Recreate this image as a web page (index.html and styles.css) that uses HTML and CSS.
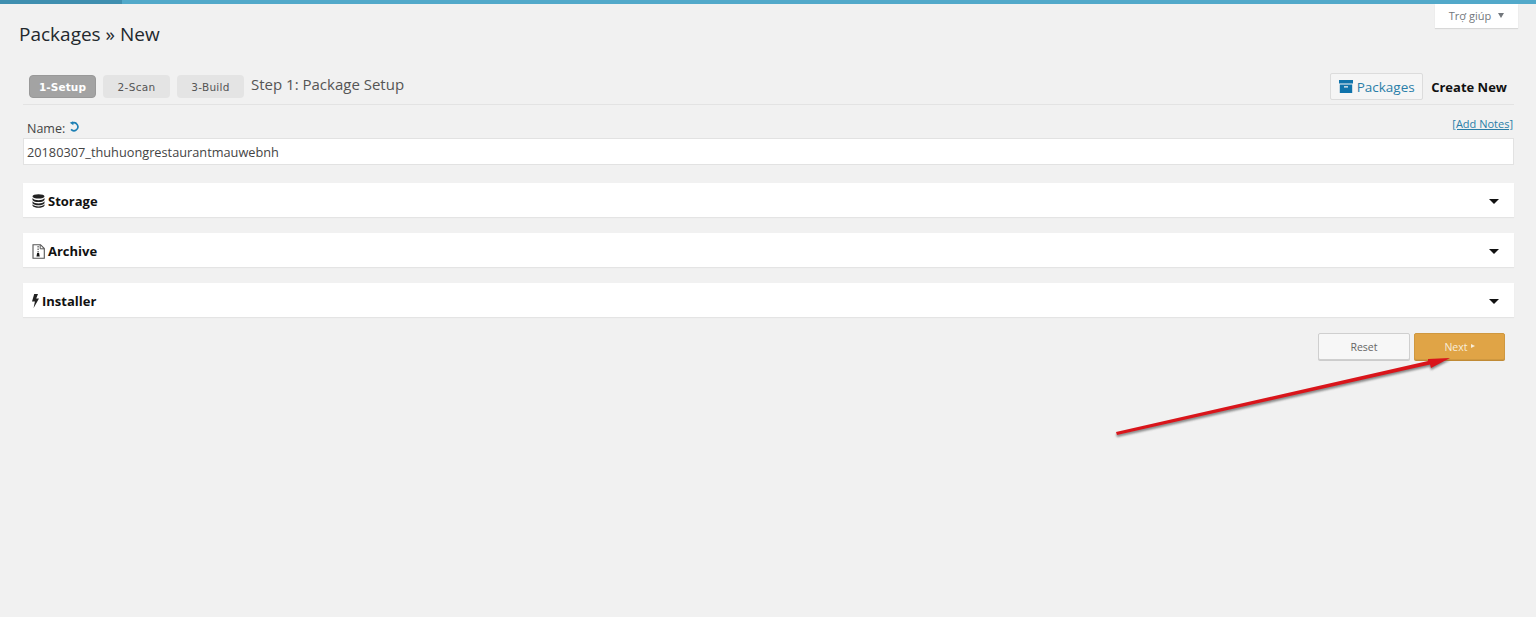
FILE: index.html
```html
<!DOCTYPE html>
<html lang="vi">
<head>
<meta charset="utf-8">
<title>Packages » New</title>
<link rel="stylesheet" href="styles.css">
</head>
<body>
<div class="topbar"><div class="topbar-dark"></div></div>
<div class="help-row"><div class="help-tab">Trợ giúp <span class="help-caret"></span></div></div>
<main class="wrap">
  <h1 class="title">Packages » New</h1>
  <div class="steps-row">
    <div class="steps">
      <span class="step step-active">1-Setup</span>
      <span class="step">2-Scan</span>
      <span class="step">3-Build</span>
      <span class="step-title">Step 1: Package Setup</span>
    </div>
    <div class="actions">
      <a class="pk-btn"><svg class="pk-icon" viewBox="0 0 14 13"><path d="M0 0h14v3.500H0z"/><path d="M.8 4.500h12.400V13H.8zM5 6.200v1.300h4V6.200z" fill-rule="evenodd"/></svg>Packages</a>
      <span class="create">Create New</span>
    </div>
  </div>
  <div class="name-area">
    <div class="name-head">
      <span class="name-label">Name: <svg class="undo" viewBox="0 0 12 12"><path d="M2.200 9.200 A4.300 4.300 0 1 0 3.400 2.400" fill="none" stroke="#1c7fb4" stroke-width="1.800"/><path d="M.8 1.800 L4.600 .2 L4.800 4.600 Z" fill="#1c7fb4"/></svg></span>
      <a class="notes">[Add Notes]</a>
    </div>
    <div class="name-input">20180307_thuhuongrestaurantmauwebnh</div>
  </div>
  <section class="panel">
    <div class="panel-title"><svg class="ic ic-db" viewBox="0 0 13 14"><ellipse cx="6.500" cy="2.400" rx="6" ry="2.200"/><path d="M.5 4c1 1.600 3.500 2.200 6 2.200S11.500 5.600 12.500 4v1.900c-1 1.500-3.500 2.200-6 2.200S1.500 7.400.5 5.900zM.5 7.200c1 1.500 3.500 2.200 6 2.200s5-.7 6-2.200v2c-1 1.500-3.500 2.100-6 2.100s-5-.6-6-2.100zM.5 10.300c1 1.500 3.500 2.100 6 2.100s5-.6 6-2.100v1.400c-1 1.500-3.500 2.100-6 2.100s-5-.6-6-2.100z"/></svg>Storage</div>
    <span class="caret"></span>
  </section>
  <section class="panel">
    <div class="panel-title"><svg class="ic ic-ar" viewBox="0 0 13 15"><path d="M1 .7h7.500L12.300 4.500V14.300H1z" fill="none" stroke="#555" stroke-width="1.100"/><path d="M8.200 1v3.800H12" fill="none" stroke="#555"/><path d="M5.500 2h1.200v1.500H5.500zM5.500 4.500h1.200V6H5.500zM5.500 7h1.200v1.500H5.500z" fill="#555"/><path d="M5.100 9h2l.6 3.400H4.500z" fill="#111"/></svg>Archive</div>
    <span class="caret"></span>
  </section>
  <section class="panel">
    <div class="panel-title"><svg class="ic ic-bolt" viewBox="0 0 7 14"><path d="M2.200 0H6L4.200 4.600H7L1.600 14 2.900 7.400H0z"/></svg>Installer</div>
    <span class="caret"></span>
  </section>
  <div class="buttons">
    <span class="btn btn-reset">Reset</span>
    <span class="btn btn-next">Next <i class="next-arrow"></i></span>
  </div>
</main>
<svg class="arrow" viewBox="0 0 360 90" aria-hidden="true">
  <defs>
    <filter id="sh" x="-5%" y="-50%" width="110%" height="200%"><feGaussianBlur stdDeviation="1"/></filter>
  </defs>
  <g fill="#555" opacity=".7" filter="url(#sh)" transform="translate(0 2)">
    <path d="M1 80 L313 9 L313 7 L335 6 L316 16 L315 12.500 L2 83 Z"/>
  </g>
  <path d="M1 80 L313 9 L313 7 L335 6 L316 16 L315 12.500 L2 83 Z" fill="#d9151b"/>
</svg>
</body>
</html>
```
FILE: styles.css
```css
* { box-sizing: border-box; }
html, body { margin: 0; padding: 0; height: 617px; overflow: hidden; }
body { background: #f1f1f1; font-family: "Open Sans", "Liberation Sans", sans-serif; color: #333; position: relative; }
.topbar { height: 4px; background: #52a9ca; }
.topbar-dark { width: 122px; height: 4px; background: #3f8fb0; }
.help-row { display: flex; justify-content: flex-end; padding-right: 18px; height: 25px; margin-bottom: -29px; position: relative; z-index: 1; }
.help-tab { width: 83px; height: 24px; background: #fff; box-shadow: 0 1px 1px rgba(0,0,0,.1); font-size: 11px; color: #72777c; display: flex; align-items: center; justify-content: center; gap: 6px; padding-bottom: 2px; }
.help-caret { width: 0; height: 0; border-left: 3.5px solid transparent; border-right: 3.5px solid transparent; border-top: 5px solid #72777c; margin-left: 1px; }
.wrap { padding: 0 22px 0 23px; }
.title { margin: 0 0 0 -4px; padding-top: 21px; height: 75px; font-size: 19px; line-height: 26px; font-weight: 400; color: #23282d; }
.steps-row { display: flex; justify-content: space-between; align-items: flex-start; height: 30px; border-bottom: 1px solid #e3e3e3; padding-left: 6px; padding-right: 7px; }
.steps { display: flex; align-items: center; gap: 7px; height: 23px; }
.step { width: 67px; height: 23px; border-radius: 4px; background: #e4e4e4; font-family: "DejaVu Sans", sans-serif; font-size: 10.5px; color: #555; display: flex; align-items: center; justify-content: center; letter-spacing: .3px; padding-top: 1px; }
.step-active { background: #a3a3a3; color: #fff; font-weight: 700; border: 1px solid #999; letter-spacing: .1px; }
.step-title { font-size: 15px; color: #555; margin-top: -6px; }
.actions { display: flex; align-items: center; gap: 8px; margin-top: -2px; }
.pk-btn { height: 27px; width: 93px; border: 1px solid #dcdcdc; background: #f5f5f5; border-radius: 2px; color: #2a7ea8; font-size: 13.5px; display: flex; align-items: center; justify-content: center; gap: 4px; }
.pk-icon { width: 14px; height: 13px; fill: #0f73ab; }
.create { font-size: 13px; font-weight: 700; color: #111; }
.name-area { padding-top: 14px; }
.name-head { display: flex; justify-content: space-between; height: 19px; }
.name-label { font-size: 12.5px; line-height: 20px; margin-left: 4px; color: #444; }
.undo { width: 11px; height: 11px; margin-left: 1px; vertical-align: 1px; }
.notes { font-size: 11px; color: #2a7ea8; text-decoration: underline; line-height: 10px; margin-right: 1px; margin-left: -3px; }
.name-input { height: 27px; background: #fff; border: 1px solid #e2e2e2; font-size: 12.75px; line-height: 26px; padding-left: 3px; color: #444; margin-bottom: 18px; }
.panel { height: 34px; background: #fff; margin-bottom: 16px; box-shadow: 0 1px 1px rgba(0,0,0,.05); display: flex; align-items: center; justify-content: space-between; padding: 0 15px 0 9px; }
.panel-title { display: flex; align-items: center; gap: 3px; font-size: 13px; font-weight: 700; color: #111; padding-top: 2px; }
.ic { fill: #222; }
.ic-db { width: 13px; height: 14px; }
.ic-ar { width: 13px; height: 15px; }
.ic-bolt { width: 7px; height: 14px; }
.caret { width: 0; height: 0; border-left: 5px solid transparent; border-right: 5px solid transparent; border-top: 5px solid #111; margin-top: 2px; }
.buttons { display: flex; justify-content: flex-end; gap: 4px; padding-right: 9px; }
.btn { width: 92px; height: 27px; border-radius: 2px; font-size: 10.5px; display: flex; align-items: center; justify-content: center; }
.btn-reset { background: #f7f7f7; border: 1px solid #cfcfcf; color: #666; box-shadow: 0 1px 0 #ccc; }
.btn-next { width: 91px; background: #e0a446; border: 1px solid #cf9840; color: #f8edda; box-shadow: 0 1px 0 #c08a35; gap: 3px; }
.next-arrow { width: 0; height: 0; border-top: 2.500px solid transparent; border-bottom: 2.500px solid transparent; border-left: 4px solid #f8edda; margin-bottom: 1px; }
.arrow { position: absolute; left: 1115px; top: 352px; width: 360px; height: 90px; overflow: visible; }
```
